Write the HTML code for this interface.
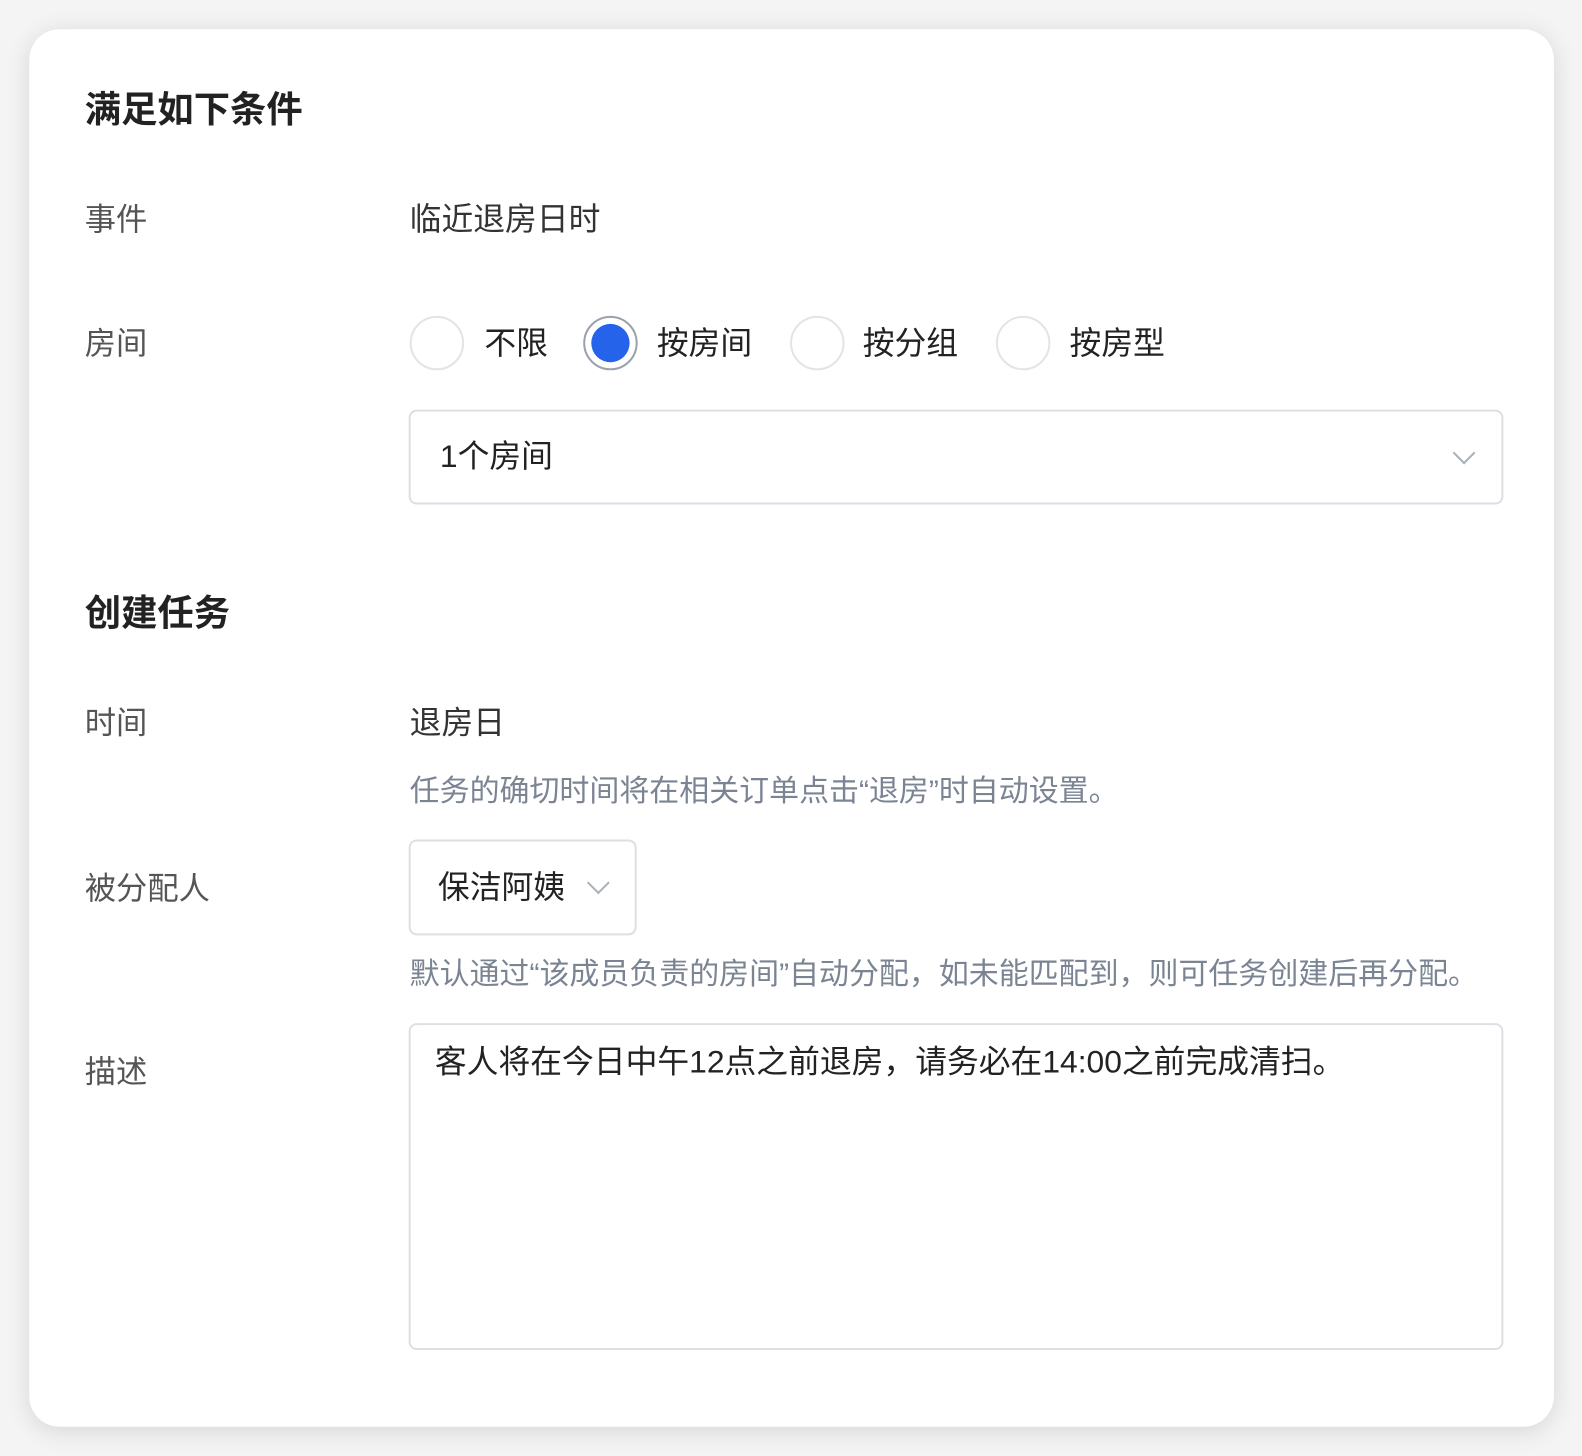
<!DOCTYPE html>
<html><head><meta charset="utf-8"><style>
html,body{margin:0;padding:0}
body{width:1582px;height:1456px;background:#f4f4f4;position:relative;overflow:hidden;font-family:"Liberation Sans","Noto Sans CJK SC",sans-serif}
#w{position:absolute;left:0;top:0;width:1568px;height:1443px;transform:scale(1.009);transform-origin:0 0}
.card{position:absolute;left:29px;top:29px;width:1511px;height:1385px;background:#fff;border-radius:30px;box-shadow:0 4px 24px rgba(0,0,0,.12)}
.t{position:absolute;white-space:nowrap;line-height:1}
.h{font-size:36px;font-weight:bold;color:#222}
.l{font-size:31px;color:#555}
.v{font-size:31.5px;color:#333}
.hint{font-size:29.7px;color:#7b8493}
.box{position:absolute;border:2px solid #dcdfe4;border-radius:8px;box-sizing:border-box;background:#fff}
.r{position:absolute;width:54px;height:54px;border:2px solid #e2e4e8;border-radius:50%;box-sizing:border-box;top:313px}
.chev{position:absolute;width:14px;height:14px;border-right:2px solid #aab0b8;border-bottom:2px solid #aab0b8;transform:rotate(45deg)}
</style></head><body><div id="w">
<div class="card"></div>
<div class="t h" style="left:84px;top:91px">满足如下条件</div>
<div class="t l" style="left:84px;top:202px">事件</div>
<div class="t v" style="left:406px;top:202px">临近退房日时</div>
<div class="t l" style="left:84px;top:325px">房间</div>
<div class="r" style="left:406px"></div>
<div class="t v" style="left:480px;top:325px;color:#222">不限</div>
<div class="r" style="left:578px;border-color:#9aa1ab"><div style="position:absolute;left:6px;top:6px;width:38px;height:38px;border-radius:50%;background:#2563eb"></div></div>
<div class="t v" style="left:651px;top:325px;color:#222">按房间</div>
<div class="r" style="left:783px"></div>
<div class="t v" style="left:855px;top:325px;color:#222">按分组</div>
<div class="r" style="left:987px"></div>
<div class="t v" style="left:1060px;top:325px;color:#222">按房型</div>
<div class="box" style="left:405px;top:406px;width:1085px;height:94px"></div>
<div class="t v" style="left:436px;top:437px;color:#222">1个房间</div>
<div class="chev" style="left:1443px;top:441px"></div>
<div class="t h" style="left:84px;top:590px">创建任务</div>
<div class="t l" style="left:84px;top:701px">时间</div>
<div class="t v" style="left:406px;top:701px">退房日</div>
<div class="t hint" style="left:406px;top:770px">任务的确切时间将在相关订单点击“退房”时自动设置。</div>
<div class="t l" style="left:84px;top:865px">被分配人</div>
<div class="box" style="left:405px;top:832px;width:226px;height:95px"></div>
<div class="t v" style="left:434px;top:864px;color:#222">保洁阿姨</div>
<div class="chev" style="left:585px;top:867px"></div>
<div class="t hint" style="left:406px;top:951px">默认通过“该成员负责的房间”自动分配，如未能匹配到，则可任务创建后再分配。</div>
<div class="t l" style="left:84px;top:1047px">描述</div>
<div class="box" style="left:405px;top:1014px;width:1085px;height:324px"></div>
<div class="t v" style="left:431px;top:1037px;color:#222">客人将在今日中午12点之前退房，请务必在14:00之前完成清扫。</div>
</div></body></html>
